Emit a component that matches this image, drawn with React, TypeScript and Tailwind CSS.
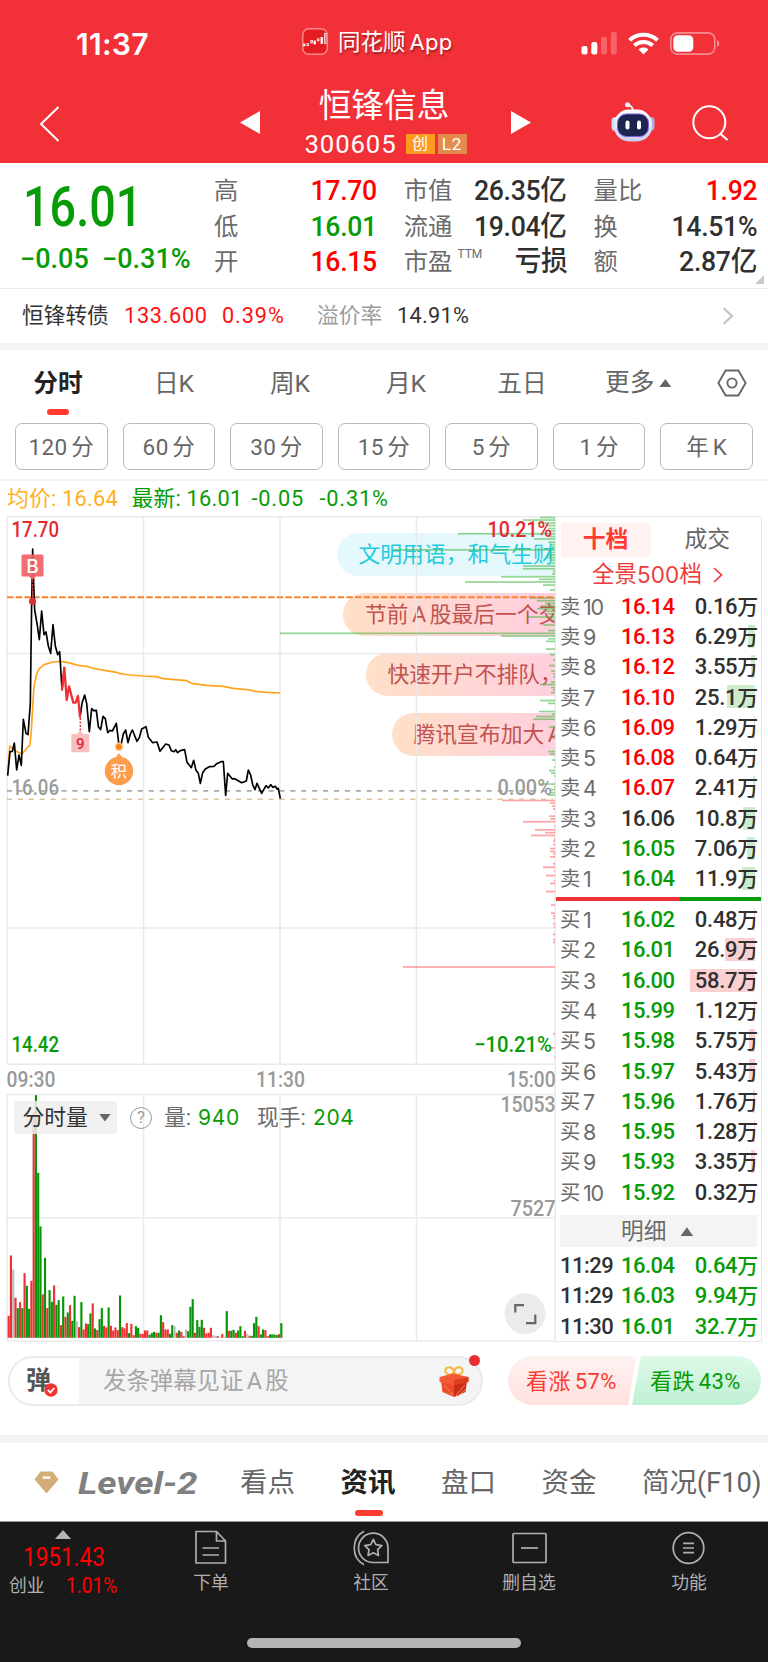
import React from "react"

const quotes = [
  [
    { label: "高", value: "17.70", color: "text-[#ff0000]" },
    { label: "低", value: "16.01", color: "text-[#079b07]" },
    { label: "开", value: "16.15", color: "text-[#ff0000]" },
  ],
  [
    { label: "市值", value: "26.35亿", color: "text-[#303030]" },
    { label: "流通", value: "19.04亿", color: "text-[#303030]" },
    { label: "市盈", value: "亏损", color: "text-[#303030]", sup: "TTM" },
  ],
  [
    { label: "量比", value: "1.92", color: "text-[#ff0000]" },
    { label: "换", value: "14.51%", color: "text-[#303030]" },
    { label: "额", value: "2.87亿", color: "text-[#303030]" },
  ],
]

const periods = ["分时", "日K", "周K", "月K", "五日"]
const minutes = ["120 分", "60 分", "30 分", "15 分", "5 分", "1 分", "年 K"]

const red = "text-[#ff0000]"
const green = "text-[#079b07]"
const dark = "text-[#303030]"

const sells = [
  { n: 10, price: "16.14", vol: "0.16万", color: red, bar: 0 },
  { n: 9, price: "16.13", vol: "6.29万", color: red, bar: 7 },
  { n: 8, price: "16.12", vol: "3.55万", color: red, bar: 4 },
  { n: 7, price: "16.10", vol: "25.1万", color: red, bar: 28 },
  { n: 6, price: "16.09", vol: "1.29万", color: red, bar: 1 },
  { n: 5, price: "16.08", vol: "0.64万", color: red, bar: 1 },
  { n: 4, price: "16.07", vol: "2.41万", color: red, bar: 2 },
  { n: 3, price: "16.06", vol: "10.8万", color: dark, bar: 12 },
  { n: 2, price: "16.05", vol: "7.06万", color: green, bar: 8 },
  { n: 1, price: "16.04", vol: "11.9万", color: green, bar: 13 },
]

const buys = [
  { n: 1, price: "16.02", vol: "0.48万", color: green, bar: 1 },
  { n: 2, price: "16.01", vol: "26.9万", color: green, bar: 30 },
  { n: 3, price: "16.00", vol: "58.7万", color: green, bar: 65 },
  { n: 4, price: "15.99", vol: "1.12万", color: green, bar: 1 },
  { n: 5, price: "15.98", vol: "5.75万", color: green, bar: 6 },
  { n: 6, price: "15.97", vol: "5.43万", color: green, bar: 6 },
  { n: 7, price: "15.96", vol: "1.76万", color: green, bar: 2 },
  { n: 8, price: "15.95", vol: "1.28万", color: green, bar: 1 },
  { n: 9, price: "15.93", vol: "3.35万", color: green, bar: 4 },
  { n: 10, price: "15.92", vol: "0.32万", color: green, bar: 0 },
]

const details = [
  { time: "11:29", price: "16.04", vol: "0.64万" },
  { time: "11:29", price: "16.03", vol: "9.94万" },
  { time: "11:30", price: "16.01", vol: "32.7万" },
]

// r = up, g = down, n = flat
const volumes =
  "r66 r247 n205 r120 g89 r107 g89 r194 g156 g87 r171 r678 g728 g495 g334 r130 g240 r89 g143 g108 r157 g99 g113 r38 g124 r63 g76 r98 g51 g126 n50 r32 g107 r25 r43 g41 g73 r103 g28 r23 g56 g89 r36 r31 g91 r36 r22 r31 r23 g127 r32 r28 r44 g14 r42 r8 g35 g30 r12 r12 r22 r22 g9 g14 g18 r15 g15 g68 r47 r25 r25 g12 g38 n35 r15 g22 r18 r5 n25 g20 g93 g116 r15 g53 g33 g54 r30 r13 r15 r30 n8 n6 r5 n2 r11 n3 g80 r21 g21 g24 r15 g22 g35 g5 r21 n12 r6 g6 g44 g63 r35 g10 g25 r23 r5 g10 g10 g10 g8 r11 g44"

const sellDepth = [
  [517.5, 15], [520, 32], [523, 17], [525.5, 9], [528.5, 7], [531, 5], [533.7, 97], [536.5, 5], [539, 21],
  [542, 7], [544.5, 4], [547, 3], [549.8, 162], [552.5, 4], [555, 7], [557.5, 8], [560, 4], [563, 3],
  [566, 32], [568.7, 32], [571.3, 2], [573.7, 3], [576.7, 54], [579.3, 16], [582, 90], [585, 12], [590, 5],
  [598, 25], [600.7, 18], [603.3, 10], [606, 14], [608.7, 18], [611.3, 9], [614, 7], [617, 27], [620, 4],
  [625, 12], [630.5, 7], [633.3, 275], [636, 54], [638.7, 7], [641.3, 9], [649, 9], [654.5, 5], [660, 2],
  [665.5, 6], [671, 4], [674, 2], [677, 2], [682, 4], [684.5, 15], [687.5, 4], [690, 2], [692.5, 4],
  [700.5, 15], [703.3, 7], [711.5, 16], [714, 3], [716.5, 19], [719.2, 22], [727, 6], [735, 2], [738, 2],
  [751.5, 7], [754, 5], [760, 3], [767, 1], [770.5, 6], [773, 4], [776, 1], [784, 15], [787, 1], [789.5, 4],
  [792.5, 5], [795, 7],
]

const buyDepth = [
  [800.4, 53], [803, 5], [806, 3], [809, 2], [816.2, 6], [818.9, 5], [821.7, 32], [826.4, 1], [829.8, 20],
  [832.6, 10], [835.4, 24], [839, 1], [841, 2], [844.5, 2], [848.5, 5], [851.5, 5], [854, 2], [856.8, 5],
  [863.8, 2], [867.2, 12], [871, 1], [875.5, 9], [881, 1], [883.4, 5], [891.5, 9], [905, 4], [913, 4],
  [915.7, 2], [918.3, 2], [923.7, 2], [927, 1], [934.4, 2], [939.7, 2], [942.4, 2], [966.9, 152],
  [1033.8, 2], [1047.8, 4], [1057.4, 1],
]

const danmaku = [
  { text: "文明用语，和气生财", box: "ml-[336.5px] bg-[#e5f8fc] text-[#22cbdc]" },
  { text: "节前 A 股最后一个交", box: "ml-[343px] bg-linear-to-r from-[#ffe0c8] to-[#ffcfdd] to-90% text-[#c2524f]" },
  { text: "快速开户不排队，", box: "ml-[365.5px] bg-linear-to-r from-[#ffe0c8] to-[#ffcfdd] text-[#c2524f]" },
  { text: "腾讯宣布加大 A", box: "ml-[391.5px] bg-linear-to-r from-[#ffe0c8] to-[#ffcfdd] text-[#c2524f]" },
]

const StatusBar = () => {
  return (
    <div className="flex h-[82px] items-start pt-[27px] text-white">
      <div className="ml-[76px] w-[226px] pt-[3px] [font-family:Inter,sans-serif] text-[30px] leading-[28px] font-semibold tracking-[0.3px]">
        11:37
      </div>
      <div className="flex w-[279px] items-center">
        <svg className="h-[27px] w-[26px]" viewBox="0 0 26 27">
          <rect x="0.8" y="0.8" width="24.4" height="25.4" rx="6" fill="#e51c22" stroke="#f98a8d" strokeWidth="1.4" />
          <g stroke="#fff" fill="#fff" strokeWidth="0.8">
            <rect x="1.6" y="16" width="1.4" height="1.8" />
            <rect x="5" y="15.6" width="1.4" height="2" fill="none" />
            <rect x="8.8" y="12.5" width="1.6" height="2.4" fill="none" />
            <rect x="12" y="13" width="1.4" height="3" />
            <rect x="15.4" y="10.8" width="1.6" height="2" fill="none" />
            <rect x="19" y="9.5" width="1.4" height="6" />
            <rect x="22.6" y="5.5" width="1.4" height="10" fill="none" />
          </g>
        </svg>
        <span className="ml-[10px] pt-[1px] text-[22.5px] leading-[28px] whitespace-nowrap [text-shadow:1px_2px_2px_rgba(0,0,0,0.35)]">
          同花顺<span className="ml-[4px] tracking-[0.3px] [font-family:Inter,sans-serif] text-[22px]">App</span>
        </span>
      </div>
      <svg className="mt-[5px] h-[23px] w-[140px]" viewBox="0 0 140 23" fill="#fff">
        <rect x="0.5" y="14" width="6" height="8.5" rx="2" />
        <rect x="10.3" y="10" width="6" height="12.5" rx="2" />
        <rect x="20" y="5" width="6" height="17.5" rx="2" opacity="0.25" />
        <rect x="29.8" y="0" width="6" height="22.5" rx="2" opacity="0.25" />
        <g fill="none" stroke="#fff" strokeWidth="4">
          <path d="M48.5 8.2C56.5 0.9 68.5 0.9 76.5 8.2" />
          <path d="M53.3 13.4C58.6 8.7 66.4 8.7 71.7 13.4" />
        </g>
        <path d="M57.6 17.4C60.5 15 64.5 15 67.4 17.4L62.5 22.5Z" />
        <rect x="89.8" y="0.9" width="44" height="21.2" rx="6.5" fill="none" stroke="#fff" strokeOpacity="0.45" strokeWidth="1.6" />
        <rect x="92.3" y="3.2" width="20" height="16.6" rx="4.5" />
        <path d="M136 8v7c3-1 3-6 0-7z" opacity="0.5" />
      </svg>
    </div>
  )
}

const Header = () => {
  return (
    <div className="flex h-[81px] items-start text-white">
      <svg className="mt-[24px] ml-[39px] h-[36px] w-[21px]" viewBox="0 0 21 36">
        <path d="M19.5 1L2 18L19.5 35" fill="none" stroke="#fff" strokeWidth="2" />
      </svg>
      <svg className="mt-[29px] ml-[180px] h-[23px] w-[20px]" viewBox="0 0 20 23">
        <path d="M20 0V23L0 11.5Z" fill="#fff" />
      </svg>
      <div className="flex w-[251px] flex-col items-center">
        <div className="mt-[6px] pr-[3px] text-[32.7px] leading-[36px]">恒锋信息</div>
        <div className="mt-[7px] flex h-[26px] items-center">
          <span className="mr-[9px] text-[25.7px] leading-[26px] tracking-[0.9px]">300605</span>
          <span className="mr-[3px] flex h-[20px] w-[29px] items-center justify-center bg-[#fd9a20] text-[16px] leading-none">
            创
          </span>
          <span className="flex h-[20px] w-[29px] items-center justify-center bg-[#e28b4a] text-[17px] leading-none tracking-[1px]">
            L2
          </span>
        </div>
      </div>
      <svg className="mt-[29px] h-[23px] w-[20px]" viewBox="0 0 20 23">
        <path d="M0 0V23L20 11.5Z" fill="#fff" />
      </svg>
      <svg className="mt-[20px] ml-[80px] h-[40px] w-[44px]" viewBox="0 0 44 40">
        <defs>
          <linearGradient id="shell" x1="0" y1="0" x2="0" y2="1">
            <stop offset="0" stopColor="#ffffff" />
            <stop offset="1" stopColor="#c9ceee" />
          </linearGradient>
        </defs>
        <path d="M22 9C22 5 20 4 16.5 2.8" fill="none" stroke="#e8eaf8" strokeWidth="2" />
        <circle cx="16.5" cy="2.8" r="2.5" fill="#eef0fb" />
        <rect x="0.5" y="15" width="8" height="14" rx="4" fill="#d3d9f2" />
        <rect x="35.5" y="15" width="8" height="14" rx="4" fill="#a9b4e2" />
        <rect x="3" y="7.5" width="38" height="32" rx="15" fill="url(#shell)" />
        <rect x="6.5" y="12" width="31" height="22.5" rx="9" fill="#1c2450" stroke="#7a62d8" strokeWidth="1" />
        <rect x="14.5" y="18.5" width="4" height="9" rx="2" fill="#fff" />
        <rect x="26" y="18.5" width="4" height="9" rx="2" fill="#fff" />
      </svg>
      <svg className="mt-[23px] ml-[37px] h-[37px] w-[37px]" viewBox="0 0 37 37">
        <circle cx="17.3" cy="17.3" r="16" fill="none" stroke="#fff" strokeWidth="2" />
        <path d="M28 28.5L35.5 35" stroke="#fff" strokeWidth="2.2" />
      </svg>
    </div>
  )
}

const QuotePanel = () => {
  return (
    <div className="relative flex h-[126px] border-b border-[#ececec] pt-[10px]">
      <div className="w-[214px] shrink-0">
        <div className="mt-[9px] ml-[23px] h-[50px] w-max origin-left scale-x-[0.85] text-[55px] leading-[50px] font-medium text-[#079b07]">
          16.01
        </div>
        <div className="mt-[13px] ml-[20px] flex w-max text-[27px] leading-[28px] font-medium text-[#079b07]">
          <span className="w-[82px]">−0.05</span>
          <span>−0.31%</span>
        </div>
      </div>
      {quotes.map((column, i) => (
        <div key={i} className="mr-[26.5px] w-[163.3px] shrink-0">
          {column.map((item) => (
            <div key={item.label} className="flex h-[35.5px] items-center justify-between">
              <span className="flex text-[24.3px] leading-[35px] text-[#6b6b6b]">
                {item.label}
                {item.sup && <sup className="top-0 ml-[5px] pt-[4px] text-[12px] leading-none">{item.sup}</sup>}
              </span>
              <span
                className={`origin-right scale-x-[0.95] text-[28px] leading-[35px] font-medium tracking-[-0.3px] whitespace-nowrap ${item.color}`}
              >
                {item.value}
              </span>
            </div>
          ))}
        </div>
      ))}
      <div className="absolute right-[4px] bottom-[4px] h-[9px] w-[9px] bg-[#c9c9c9] [clip-path:polygon(100%_0,100%_100%,0_100%)]"></div>
    </div>
  )
}

const BondRow = () => {
  return (
    <div className="flex h-[53.5px] items-center pt-[1px] pl-[22px] text-[21.7px] text-[#333]">
      <span className="w-[102px]">恒锋转债</span>
      <span className="w-[98px] tracking-[0.7px] text-[#ff1010]">133.600</span>
      <span className="w-[95px] tracking-[0.9px] text-[#ff1010]">0.39%</span>
      <span className="w-[80px] text-[#9b9b9b]">溢价率</span>
      <span className="w-[325px] tracking-[0.3px]">14.91%</span>
      <svg className="h-[18px] w-[12px]" viewBox="0 0 12 18">
        <path d="M1.5 1L10 9L1.5 17" fill="none" stroke="#c4c4c4" strokeWidth="2.2" />
      </svg>
    </div>
  )
}

const PeriodTabs = () => {
  return (
    <div className="h-[131px] border-b-2 border-[#f1f1f1]">
      <div className="flex h-[66px] text-[24.7px] leading-[68px] text-[#666]">
        {periods.map((name, i) => (
          <div
            key={name}
            className={i === 0 ? "relative w-[116px] text-center font-bold text-[#222]" : "w-[116px] text-center"}
          >
            {name}
            {i === 0 && (
              <span className="absolute bottom-[1px] left-[47px] h-[6px] w-[22px] rounded-[3px] bg-[#fd3b30]"></span>
            )}
          </div>
        ))}
        <div className="flex w-[137px] items-center pl-[25px]">
          更多
          <span className="ml-[5px] h-[8px] w-[12px] bg-[#666] [clip-path:polygon(50%_0,100%_100%,0_100%)]"></span>
        </div>
        <svg className="mt-[18.5px] h-[28px] w-[30px]" viewBox="0 0 30 28" fill="none" stroke="#666" strokeWidth="1.9">
          <path d="M8.6 1.5H21.4L28.6 14L21.4 26.5H8.6L1.4 14Z" strokeLinejoin="round" />
          <circle cx="15" cy="14" r="4.6" />
        </svg>
      </div>
      <div className="mt-[7px] grid grid-cols-7 gap-[15px] px-[15px]">
        {minutes.map((name) => (
          <button
            key={name}
            className="h-[47px] rounded-[7px] border-[1.5px] border-[#b9b9b9] pt-[1px] text-center text-[22.5px] leading-[43px] tracking-[0.4px] text-[#666] [word-spacing:-2.5px]"
          >
            {name}
          </button>
        ))}
      </div>
    </div>
  )
}

const Label = ({ x, y, w, fill, size = 21.5, weight = 500, children }) => {
  return (
    <text x={x} y={y} textLength={w} lengthAdjust="spacingAndGlyphs" fill={fill} fontSize={size} fontWeight={weight}>
      {children}
    </text>
  )
}

const Depth = ({ rows, color }) => {
  return (
    <g fill={color}>
      {rows.map(([y, len]) => (
        <rect key={y} x={555 - len} y={y - 0.8} width={len} height="1.7" />
      ))}
    </g>
  )
}

const barColors = { r: "#ee3135", g: "#079607", n: "#bdbdbd" }

const Chart = () => {
  return (
    <div className="relative h-[828px] w-[556px] shrink-0">
      <div className="absolute inset-0 overflow-hidden pt-[16.5px]">
        {danmaku.map((item) => (
          <div
            key={item.text}
            className={`mb-[17.3px] h-[43px] rounded-l-full pl-[22px] text-[21.8px] leading-[44px] whitespace-nowrap [word-spacing:-2px] ${item.box}`}
          >
            {item.text}
          </div>
        ))}
      </div>
      <svg className="relative h-[828px] w-[556px]" viewBox="0 516 556 828">
        <g fill="none" stroke="#e8e8e8" strokeOpacity="0.9" strokeWidth="1.5">
          <path d="M7 516.8H556M7 1064.3H556M7 653.5H556M7 928H556M7.2 516.8V1064M143.5 516.8V1064M280 516.8V1064M416.5 516.8V1064" />
          <path d="M7 1094.6H556M7 1341H556M7 1217.7H556M7.2 1094.6V1341M143.5 1094.6V1341M280 1094.6V1341M416.5 1094.6V1341M555.3 516.8V1341" />
        </g>
        <Depth rows={sellDepth} color="rgba(60,180,60,0.55)" />
        <Depth rows={buyDepth} color="rgba(255,90,90,0.55)" />
        <path d="M7 597.3H553" stroke="#f8832f" strokeWidth="2" strokeDasharray="6.5 2.2" />
        <path d="M7 790.8H546" stroke="#a9a9a9" strokeWidth="1.8" strokeDasharray="5 5.9" />
        <path d="M7 799.3H553" stroke="#dcc39c" strokeWidth="1.5" strokeDasharray="5 5.9" />

        <g transform="translate(0 510) scale(0.33333)" fill="none" strokeWidth="5" strokeLinejoin="round">
          <path
            stroke="#ffa21c"
            d="M24 780L29 708L45 722L66 732L78 718L90 704L94 660L98 590L102 530L110 492L118 476L132 464L160 456L180 454L205 458L235 466L265 470L275 474L300 479L350 487L360 491L390 495L430 498L468 500L490 506L560 512L575 520L620 526L670 529L700 535L750 540L765 544L800 547L841 549"
          />
          <path
            stroke="#000"
            d="M23 797L30 725L37 724L43 699L50 780L57 735L64 766L70 628L78 670L84 674L91 580L95 275L98 117L101 220L104 300L111 340L118 389L125 303L132 374L138 366L145 408L152 430L159 344L166 408L173 434L179 425L186 540L193 473M240 622L246 580L254 555L260 580L268 665L275 596L281 602L289 601L295 650L302 659L309 619L316 626L323 668L330 661L337 663L349 640L357 706L364 700L370 672L377 660L384 698L391 672L397 660L411 694L418 683L425 657L438 650L445 682L458 698L471 696L480 724L497 702L507 705L514 722L522 725L527 719L533 728L541 722L554 719L561 757L574 773L581 751L588 781L595 790L601 820L608 788L616 777L628 770L642 769L650 761L663 755L670 755L677 856L683 790L697 807L704 806L725 818L739 813L745 780L752 795L758 824L765 839L771 820L785 850L798 827L805 834L812 824L819 832L826 829L832 838L835 835L841 866"
          />
          <path
            stroke="#ee3135"
            strokeWidth="7"
            d="M186 540L193 473L200 570L207 529L220 578L227 578L234 558L240 622"
          />
        </g>

        <path d="M32.5 577V597" stroke="#ee3135" strokeWidth="1.5" strokeDasharray="2 1.5" />
        <rect x="21.5" y="554.5" width="22" height="22" rx="1.5" fill="#f06266" fillOpacity="0.93" />
        <path d="M29 576L32.5 580L36 576Z" fill="#f06266" />
        <circle cx="32.5" cy="601.3" r="3.6" fill="#dc3038" />
        <text x="32.5" y="572.6" fill="#fff" fontSize="19" textAnchor="middle" fontFamily="Inter" fontWeight="500">
          B
        </text>
        <path d="M80.3 718V733" stroke="#ee3135" strokeWidth="1.5" strokeDasharray="2 1.5" />
        <rect x="71.3" y="734" width="18" height="18.3" rx="1.5" fill="#f8bfc1" />
        <path d="M77 734L80.3 730.5L83.5 734Z" fill="#f8bfc1" />
        <text x="80.2" y="749" fill="#e0242c" fontSize="15" textAnchor="middle" fontWeight="500">
          9
        </text>
        <circle cx="119" cy="746.8" r="4.2" fill="#fdbf85" />
        <circle cx="119" cy="746.8" r="2.8" fill="#f98216" />
        <circle cx="119" cy="771" r="14.2" fill="#fd9d4c" />
        <path d="M115 758.5L119 753L123 758.5Z" fill="#fd9d4c" />
        <text x="118.8" y="776.8" fill="#fff" fontSize="16" textAnchor="middle">
          积
        </text>

        <Label x={11.5} y={537} w={47.5} fill="#e42930">17.70</Label>
        <Label x={487.5} y={537} w={64.5} fill="#e42930">10.21%</Label>
        <Label x={11.5} y={795} w={47.5} fill="#9b9b9b">16.06</Label>
        <Label x={497.5} y={794.7} w={54.5} fill="#9b9b9b">0.00%</Label>
        <Label x={11.5} y={1052} w={47.5} fill="#079b07">14.42</Label>
        <Label x={474} y={1052} w={78} fill="#079b07">−10.21%</Label>
        <Label x={6.5} y={1086.6} w={49} fill="#999">09:30</Label>
        <Label x={256} y={1086.6} w={49} fill="#999">11:30</Label>
        <Label x={507} y={1086.6} w={48.5} fill="#999">15:00</Label>
        <Label x={500.5} y={1112} w={55} fill="#999">15053</Label>
        <Label x={510.5} y={1216.3} w={45} fill="#999">7527</Label>

        {volumes.split(" ").map((v, i) => {
          const h = Number(v.slice(1)) / 3
          return <rect key={i} x={7.6 + i * 2.272} y={1337.8 - h} width="2.15" height={h} fill={barColors[v[0]]} />
        })}

        <circle cx="525" cy="1313.5" r="20.5" fill="#ebebeb" />
        <path d="M515.3 1312.5V1305.1H524M535.3 1314.5V1323.2H526" fill="none" stroke="#666" strokeWidth="2.2" />
      </svg>
      <div className="absolute top-[585px] left-[13.5px] flex h-[33px] items-center text-[21.8px] leading-[33px] text-[#6b6b6b]">
        <div className="flex w-[103.5px] items-center rounded-[3px] bg-[#efefef]/85 pl-[9px] text-[#333]">
          分时量
          <span className="ml-[11px] h-[8px] w-[12px] bg-[#666] [clip-path:polygon(0_0,100%_0,50%_100%)]"></span>
        </div>
        <div className="ml-[13px] flex h-[22px] w-[22px] items-center justify-center rounded-full border-[1.5px] border-[#999] text-[17px] leading-none text-[#999]">
          ?
        </div>
        <div className="ml-[12px] flex w-[93px] items-center">
          量:<span className="ml-[7px] tracking-[0.7px] text-[#079b07] [font-family:Inter,sans-serif] text-[21px]">940</span>
        </div>
        <div className="flex items-center">
          现手:<span className="ml-[7px] tracking-[0.7px] text-[#079b07] [font-family:Inter,sans-serif] text-[21px]">204</span>
        </div>
      </div>
    </div>
  )
}

const BookRow = ({ side, row }) => {
  return (
    <div className="relative flex h-[30.3px] items-center pl-[4px] text-[22px] leading-[30px]">
      <span
        className={`absolute top-[3px] right-[6px] h-[23px] ${side === "卖" ? "bg-[#cdebcd]" : "bg-[#fbd0d2]"}`}
        style={{ width: row.bar }}
      ></span>
      <span className="w-[23px] text-[20.3px] text-[#6b6b6b]">{side}</span>
      <span className="w-[38px] text-[21.5px] tracking-[-1.2px] text-[#6b6b6b] [font-family:Inter,sans-serif]">{row.n}</span>
      <span className={`w-[53px] font-medium tracking-[-0.5px] ${row.color}`}>{row.price}</span>
      <span className="relative flex-1 pr-[3px] text-right font-medium tracking-[-0.3px] whitespace-nowrap text-[#303030]">
        {row.vol.slice(0, -1)}
        <span className="text-[21px]">万</span>
      </span>
    </div>
  )
}

const OrderBook = () => {
  return (
    <div className="h-[826px] w-[206px] shrink-0 border-t-[1.5px] border-r-[1.5px] border-b-[1.5px] border-[#e8e8e8]">
      <div className="flex pt-[5.5px] pl-[4.5px] text-[22.8px] leading-[34px]">
        <div className="w-[92.5px] rounded-[3px] bg-[#fff2f1] text-center font-bold text-[#fd3b30]">十档</div>
        <div className="w-[113px] pl-[3px] text-center text-[#666]">成交</div>
      </div>
      <div className="mt-[1px] flex h-[34px] items-center pl-[36px] text-[22.5px] text-[#ee3d3a]">
        全景<span className="tracking-[0.1px] [font-family:Inter,sans-serif]">500</span>档
        <svg className="ml-[11px] h-[16px] w-[10px]" viewBox="0 0 10 16">
          <path d="M1 1L8.5 8L1 15" fill="none" stroke="#ee3d3a" strokeWidth="1.7" />
        </svg>
      </div>
      <div>
        {sells.map((row) => (
          <BookRow key={row.n} side="卖" row={row} />
        ))}
      </div>
      <div className="mt-[3px] mb-[4px] flex h-[3.5px]">
        <div className="w-[123.5px] bg-[#ee3135]"></div>
        <div className="flex-1 bg-[#079b07]"></div>
      </div>
      <div>
        {buys.map((row) => (
          <BookRow key={row.n} side="买" row={row} />
        ))}
      </div>
      <div className="mt-[7px] mr-[4px] mb-[3px] ml-[4px] flex h-[32.5px] items-center bg-[#f4f4f4] pt-[1px] pl-[61px] text-[22.7px] text-[#6b6b6b]">
        明细
        <span className="ml-[14px] h-[9px] w-[13px] bg-[#666] [clip-path:polygon(50%_0,100%_100%,0_100%)]"></span>
      </div>
      {details.map((row, i) => (
        <div key={i} className="flex h-[30.3px] items-center pt-[1px] pl-[4px] text-[22px] leading-[30px] font-medium tracking-[-0.5px]">
          <span className="w-[61px] text-[#303030]">{row.time}</span>
          <span className="w-[53px] text-[#079b07]">{row.price}</span>
          <span className="flex-1 pr-[3px] text-right tracking-[-0.3px] whitespace-nowrap text-[#079b07]">
            {row.vol.slice(0, -1)}
            <span className="text-[21px]">万</span>
          </span>
        </div>
      ))}
    </div>
  )
}

const DanmakuBar = () => {
  return (
    <div className="flex h-[93px] items-start pt-[13.5px] pl-[8px]">
      <div className="relative flex h-[50px] w-[474.5px] shrink-0 items-center rounded-full border-2 border-[#ebebeb] bg-[#f4f4f4]">
        <div className="relative flex h-full w-[69px] items-center rounded-l-full bg-white pl-[16px] text-[25px] font-bold text-[#555]">
          弹
          <svg className="absolute top-[25px] left-[34px] h-[14px] w-[14px]" viewBox="0 0 14 14">
            <circle cx="7" cy="7" r="6.7" fill="#f0352f" />
            <path d="M3.8 6.8L6.4 9.4L10.4 5" fill="none" stroke="#fff" strokeWidth="1.8" />
          </svg>
        </div>
        <span className="ml-[24px] pt-[2px] text-[23.4px] text-[#a6a6a6] [word-spacing:-2.5px]">发条弹幕见证 A 股</span>
        <svg className="absolute top-[8px] left-[429px] h-[32px] w-[30px]" viewBox="0 0 30 32">
          <g fill="none" stroke="#f5b73c" strokeWidth="2">
            <ellipse cx="10.5" cy="5" rx="4.2" ry="3.6" transform="rotate(25 10.5 5)" />
            <ellipse cx="19.5" cy="5" rx="4.2" ry="3.6" transform="rotate(-25 19.5 5)" />
          </g>
          <path d="M2 15L15 18V31L3.5 26Z" fill="#ee4a2c" />
          <path d="M28 15L15 18V31L26.5 26Z" fill="#c92c17" />
          <path d="M0.5 11L14 7.5L29.5 11V16L15 19L0.5 16Z" fill="#f25a35" />
          <path d="M15 14L29.5 11V16L15 19Z" fill="#dd3c20" />
          <path d="M5 19L14 29M17 29L26 19M19 30L27 23" stroke="#f98a4e" strokeWidth="1" />
        </svg>
        <span className="absolute top-[-3px] left-[459px] h-[11px] w-[11px] rounded-full bg-[#ea2c30]"></span>
      </div>
      <div className="ml-[25.5px] flex text-[22px] leading-[51px] [word-spacing:-2px]">
        <div className="h-[49.5px] w-[128px] rounded-l-full rounded-tr-[5px] bg-linear-to-b from-[#fff2f1] to-[#fee1df] pl-[18px] tracking-[0.4px] text-[#f83a30] [clip-path:polygon(0_0,100%_0,94%_100%,0_100%)]">
          看涨 57%
        </div>
        <div className="-ml-[4px] h-[49.5px] w-[129px] rounded-r-full bg-linear-to-b from-[#dff9ea] to-[#bff0d3] pl-[18px] tracking-[0.4px] text-[#079b07] [clip-path:polygon(7%_0,100%_0,100%_100%,0_100%)]">
          看跌 43%
        </div>
      </div>
    </div>
  )
}

const NewsTabs = () => {
  return (
    <div className="flex h-[78px] overflow-hidden text-[27.5px] leading-[80px] whitespace-nowrap text-[#666]">
      <svg className="mt-[28px] ml-[34px] h-[23px] w-[25px] shrink-0" viewBox="0 0 25 23">
        <path d="M6.5 0.5H18.5L24.5 8.5L12.5 22.5L0.5 8.5Z" fill="#d3ad78" />
        <rect x="8.5" y="5.5" width="8" height="2.3" rx="1" fill="#fff" />
      </svg>
      <div className="ml-[19px] w-[162px] shrink-0">
        <span className="inline-block origin-left scale-x-[1.15] text-[32px] font-bold text-[#808080] italic">Level-2</span>
      </div>
      <div className="w-[100.5px] shrink-0">看点</div>
      <div className="relative w-[100.5px] shrink-0 font-bold text-[#222]">
        资讯
        <span className="absolute bottom-[5px] left-[14px] h-[6px] w-[28px] rounded-[3px] bg-[#fd3b30]"></span>
      </div>
      <div className="w-[100.5px] shrink-0">盘口</div>
      <div className="w-[100.5px] shrink-0">资金</div>
      <div className="shrink-0 tracking-[-0.1px]">简况(F10)</div>
    </div>
  )
}

const BottomNav = () => {
  return (
    <div className="h-[141px] border-t border-[#999] bg-[#191919] text-[#b0b0b0]">
      <div className="flex h-[116px] items-start text-[17.8px] leading-[20px]">
        <div className="w-[132px] shrink-0 pt-[8px]">
          <div className="ml-[55px] h-[9px] w-[16px] bg-[#b5b5b5] [clip-path:polygon(50%_0,100%_100%,0_100%)]"></div>
          <div className="mt-[6px] ml-[23px] h-[25px] w-max origin-left scale-x-[0.9] text-[25px] leading-[25px] text-[#ff0000]">
            1951.43
          </div>
          <div className="mt-[4px] flex h-[24px] items-center pl-[9px]">
            创业
            <span className="ml-[21px] origin-left scale-x-[0.89] text-[21.5px] text-[#ff0000]">1.01%</span>
          </div>
        </div>
        <div className="flex w-[158px] shrink-0 flex-col items-center pt-[8px]">
          <svg className="mb-[7px] h-[36px] w-[34px]" viewBox="0 0 34 36" fill="none" stroke="#b0b0b0" strokeWidth="1.7">
            <path d="M2 1.5H22.5L31.5 11V33H2Z" strokeLinejoin="round" />
            <path d="M22.5 1.5V11H31.5M8.5 18H25M8.5 25H25" />
          </svg>
          下单
        </div>
        <div className="flex w-[162px] shrink-0 flex-col items-center pt-[8px]">
          <svg className="mb-[7px] h-[36px] w-[38px]" viewBox="0 0 38 36" fill="none" stroke="#b0b0b0" strokeWidth="1.7">
            <path d="M12 1.2C-1 8-1 28 12 34.8" />
            <path d="M36 17.8C36 10 29.5 3.2 21.3 3.2C13 3.2 6.5 10 6.5 17.8C6.5 25.5 12 32.5 21.5 32.5H36Z" strokeLinejoin="round" />
            <path d="M21.3 9.5L23.9 14.7L29.8 15.6L25.6 19.7L26.5 25.5L21.3 22.8L16.1 25.5L17 19.7L12.8 15.6L18.7 14.7Z" strokeLinejoin="round" />
          </svg>
          社区
        </div>
        <div className="flex w-[154px] shrink-0 flex-col items-center pt-[8px]">
          <svg className="mb-[7px] h-[36px] w-[36px]" viewBox="0 0 36 36" fill="none" stroke="#b0b0b0" strokeWidth="1.7">
            <rect x="2" y="3.5" width="33" height="29" rx="1" />
            <path d="M10 18H27" />
          </svg>
          删自选
        </div>
        <div className="flex w-[162px] shrink-0 flex-col items-center pt-[8px] pl-[4px]">
          <svg className="mb-[7px] h-[36px] w-[34px]" viewBox="0 0 34 36" fill="none" stroke="#b0b0b0" strokeWidth="1.7">
            <circle cx="16.5" cy="18" r="15.3" />
            <path d="M11 13.3H22M11 18H22M11 22.7H22" />
          </svg>
          功能
        </div>
      </div>
      <div className="mx-auto h-[9.5px] w-[274px] rounded-full bg-[#b3b3b3]"></div>
    </div>
  )
}

const App = () => {
  return (
    <div className="h-[1662px] w-[768px] overflow-hidden bg-white [font-family:Roboto,'Noto_Sans_CJK_SC',sans-serif]">
      <div className="h-[163px] bg-[#f23037]">
        <StatusBar />
        <Header />
      </div>
      <QuotePanel />
      <BondRow />
      <div className="h-[7.5px] bg-[#f4f4f4]"></div>
      <PeriodTabs />
      <div className="flex h-[35px] items-center pt-[2px] pl-[7px] text-[21.8px] tracking-[0.2px] text-[#079b07]">
        <span className="w-[124.5px] text-[#ffb01c]">均价: 16.64</span>
        <span className="w-[120px]">最新: 16.01</span>
        <span className="w-[68px] tracking-[0.8px]">-0.05</span>
        <span className="tracking-[0.8px]">-0.31%</span>
      </div>
      <div className="flex h-[826px]">
        <Chart />
        <OrderBook />
      </div>
      <DanmakuBar />
      <div className="h-[8px] bg-[#f4f4f4]"></div>
      <NewsTabs />
      <BottomNav />
    </div>
  )
}

export default App
